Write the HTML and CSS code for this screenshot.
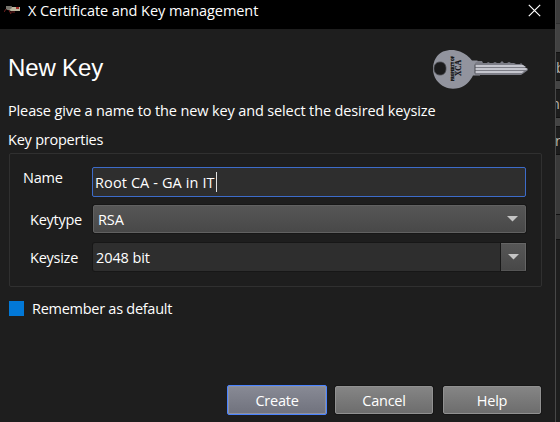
FILE: index.html
```html
<!DOCTYPE html>
<html lang="en">
<head>
<meta charset="utf-8">
<title>X Certificate and Key management</title>
<link rel="stylesheet" href="styles.css">
</head>
<body>
<main class="dialog">
  <header class="titlebar">
    <svg class="app-icon" width="18" height="12" viewBox="0 0 18 12">
      <path d="M2 2h5l1 1h8v4H7L2 5z" fill="#bcb8a0"/>
      <path d="M2 2h5l1 2-3 2-3-1z" fill="#77756d"/>
      <path d="M12 3h3v2h-3z" fill="#a02c28"/>
      <path d="M2 5L0 8M5 6l2 4M7 8h4" stroke="#742020" fill="none"/>
    </svg>
    <span class="window-title">X Certificate and Key management</span>
    <svg class="close" width="13" height="13" viewBox="0 0 13 13"><path d="M.8.8l11.4 11.4M12.2.8L.8 12.2" stroke="#fff" stroke-width="1.2"/></svg>
  </header>
  <section class="heading">
    <h1>New Key</h1>
    <svg class="key" width="98" height="40" viewBox="0 0 98 40">
      <path fill="#92949e" d="M11 2.500C16 .500 23 .300 28 2.500c5 2 9 5 12 9h5l2 1v3h-4v9h5v2h-7c-3 6-8 11-14 12.500-5 1-10 1-14-1C6 35 1 28 1 20S5 5 11 2.500z"/>
      <path d="M8 13c-4 0-6 3-6 6.500S4 26 8 26s6-2.500 6-6.500S12 13 8 13z" fill="#1b1b1c" stroke="#48494e" stroke-width=".8"/>
      <path d="M43 14l3-2h4l1 2h4l1-1 2 1h3l2-1 2 1h3l2-2 2 2h3l2-1 2 1h3l2 1h4l1-1 3 3 4 4-4 3-3 2H43z" fill="#7c7d86"/>
      <path d="M43 16h48l3 2H43zM43 19h51l2 1-2 1H43zM43 22h49l-2 2H43z" fill="#c4c5cd"/>
      <path d="M43 15.500v9" stroke="#4b4c53"/>
      <text class="key-small" transform="translate(21.500 32) rotate(-90)" textLength="25" lengthAdjust="spacingAndGlyphs">PROPERTY OF</text>
      <text class="key-name" transform="translate(29 27) rotate(-90)" textLength="16" lengthAdjust="spacingAndGlyphs">XCA</text>
    </svg>
  </section>
  <p class="intro">Please give a name to the new key and select the desired keysize</p>
  <h2 class="group-title">Key properties</h2>
  <section class="group">
    <div class="row name-row">
      <span class="label name-label">Name</span>
      <div class="field"><span>Root CA - GA in IT</span><i class="caret"></i></div>
    </div>
    <div class="row type-row">
      <span class="label">Keytype</span>
      <div class="select"><span>RSA</span><svg width="11" height="6" viewBox="0 0 11 6"><path d="M0 0h11L5.500 5.500z" fill="#c4c4c4"/></svg></div>
    </div>
    <div class="row">
      <span class="label">Keysize</span>
      <div class="combo"><span>2048 bit</span><div class="drop"><svg width="11" height="6" viewBox="0 0 11 6"><path d="M0 0h11L5.500 5.500z" fill="#c4c4c4"/></svg></div></div>
    </div>
  </section>
  <div class="remember"><i class="check"></i><span>Remember as default</span></div>
  <footer class="actions">
    <div class="button primary"><span>Create</span></div>
    <div class="button"><span>Cancel</span></div>
    <div class="button help"><span>Help</span></div>
  </footer>
</main>
<aside class="behind">
  <div class="b-top"></div>
  <div class="b-cell b-first"><span>b</span></div>
  <div class="b-cell"><span class="b-n">n</span></div>
  <div class="b-cell b-last"><span class="b-r">n</span></div>
  <div class="b-tall"></div>
  <div class="b-low"></div>
</aside>
</body>
</html>
```

FILE: styles.css
```css
* { box-sizing: border-box; }
body {
  display: flex;
  width: 560px;
  height: 422px;
  margin: 0;
  overflow: hidden;
  background: #1e1e1e;
  color: #fff;
  font: 14.5px/20px "Open Sans", "Noto Sans", sans-serif;
}
span { white-space: nowrap; }
svg { display: block; flex: none; }
.dialog { width: 555px; height: 422px; background: #1e1e1e; }
.titlebar {
  display: flex;
  height: 29px;
  padding: 0 14px 0 4px;
  background: #000;
}
.app-icon { margin-top: 4px; }
.window-title { margin: 1px 0 0 6px; letter-spacing: -.07px; }
.close { margin: 4px 0 0 auto; }
.heading {
  display: flex;
  justify-content: space-between;
  height: 69px;
  padding: 20px 25px 0 8px;
}
h1 {
  margin: 4px 0 0;
  font: 24px/30px "Liberation Sans", Arial, sans-serif;
  letter-spacing: -.15px;
}
.key-small { font: bold 4px "Liberation Serif", serif; fill: #111; stroke: #111; stroke-width: .3px; }
.key-name { font: bold 9px "Liberation Serif", serif; fill: #15151b; stroke: #15151b; stroke-width: .2px; }
.intro { height: 20px; margin: 3px 0 9px 8px; white-space: nowrap; letter-spacing: -.13px; }
.group-title { height: 20px; margin: 0 0 3px 8px; font-size: 14.5px; font-weight: 400; letter-spacing: -.23px; }
.group {
  width: 533px;
  height: 134px;
  margin-left: 9px;
  padding: 13px 0 0 13px;
  border: 1px solid #303030;
  border-radius: 2px;
}
.row { display: flex; margin-left: 7px; }
.label { width: 63px; padding-top: 5px; letter-spacing: -.25px; }
.name-row { margin-left: 0; }
.name-label { width: 69px; padding-top: 1px; }
.field {
  display: flex;
  width: 434px;
  height: 30px;
  padding: 4px 0 0 2px;
  background: #2e2e2e;
  border: 1px solid #3d6cca;
  border-radius: 2px;
}
.field span { margin-top: 1px; letter-spacing: .11px; }
.caret { width: 1px; height: 20px; margin-left: 1px; background: #e2e2e2; }
.select {
  display: flex;
  justify-content: space-between;
  width: 433px;
  height: 28px;
  padding: 4px 7px 0 4px;
  background: linear-gradient(#565656, #484848);
  border: 1px solid #616161;
  border-radius: 2px;
  box-shadow: 0 0 0 1px #171717;
}
.type-row { height: 38px; margin-top: 8px; }
.select span { letter-spacing: -.1px; }
.select svg { margin-top: 6px; }
.combo {
  display: flex;
  justify-content: space-between;
  width: 433px;
  height: 28px;
  padding-left: 3px;
  background: #2e2e2e;
  border-radius: 2px;
  box-shadow: 0 0 0 1px #171717;
}
.combo span { padding-top: 5px; letter-spacing: -.1px; }
.drop {
  width: 25px;
  height: 28px;
  padding: 11px 0 0 7px;
  background: linear-gradient(#565656, #484848);
  border-top: 1px solid #656565;
  border-right: 1px solid #656565;
  border-bottom: 1px solid #555;
  box-shadow: -1px 0 #171717;
}
.drop svg { margin-top: -1px; }
.remember { display: flex; height: 20px; margin: 11px 0 0 9px; letter-spacing: -.27px; }
.remember span { padding-top: 1px; }
.check { width: 15px; height: 15px; margin: 3px 8px 0 0; background: #0278d7; }
.actions { display: flex; margin: 67px 0 0 227px; letter-spacing: -.25px; }
.button {
  width: 98px;
  height: 28px;
  margin-top: 1px;
  padding-top: 4px;
  background: linear-gradient(#858585, #6d6d6d);
  border: 1px solid #919191;
  border-radius: 2px;
  box-shadow: 0 0 0 1px #171717;
  text-align: center;
}
.primary {
  width: 100px;
  height: 30px;
  margin: 0 8px 0 0;
  border: 1px solid #4a83ff;
  background: linear-gradient(#888a95, #70727d);
  box-shadow: inset 0 0 0 1px #8e919e;
  padding-top: 5px;
}
.help { margin-left: 10px; }
.behind { width: 5px; border-left: 1px solid #484848; overflow: hidden; }
.b-top { height: 52px; background: linear-gradient(#3c3c3c 0 23px, #303030 23px 24px, #424242 24px); }
.b-cell { height: 29px; margin-bottom: 8px; background: #1d1d1d; border: solid #111; border-width: 1px 0; overflow: hidden; box-shadow: 0 8px #444; }
.b-cell span { color: #b9b3aa; }
.b-first span { display: block; margin: 5px 0 0; }
.b-n, .b-r { display: block; margin-top: 4px; }
.b-n { margin-left: -5px; }
.b-r { margin-left: -1px; }
.b-last { margin-bottom: 0; }
.b-tall { height: 59px; background: #3a3a3a; }
.b-low { height: 26px; background: #333; border: solid #111; border-width: 1px 0; }
```
